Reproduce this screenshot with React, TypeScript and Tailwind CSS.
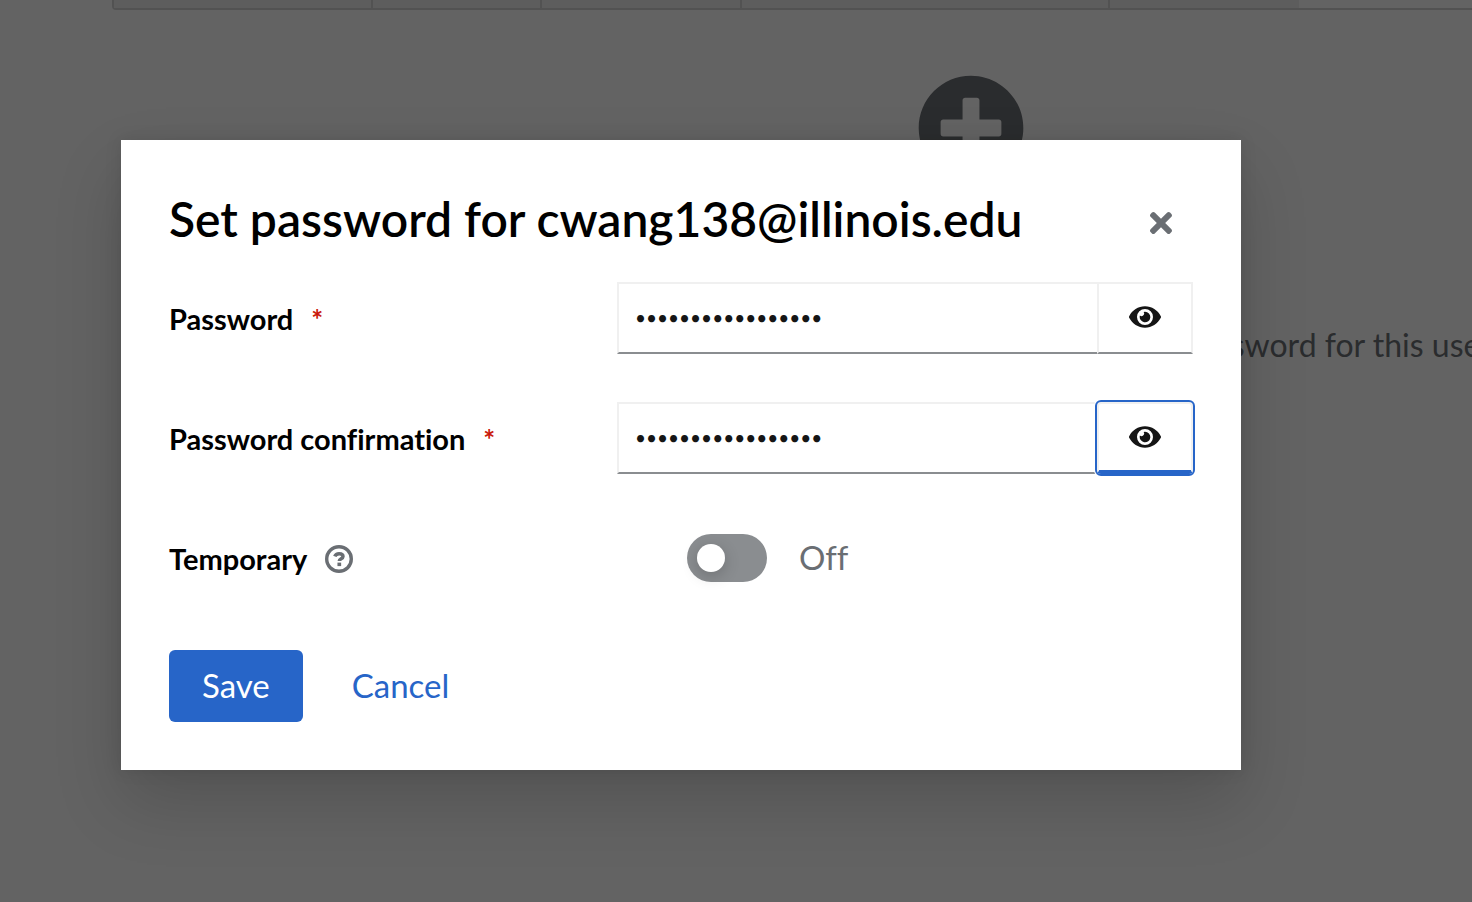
import { useState } from "react";
import type { ReactNode } from "react";
import { FaEye, FaPlusCircle, FaTimes } from "react-icons/fa";

function HelpIcon() {
  return (
    <svg width="28" height="28" viewBox="0 0 28 28" fill="none" stroke="currentColor" aria-hidden="true">
      <circle cx="14" cy="14" r="12.3" strokeWidth="3.4" />
      <path d="M9.8 11.4C10.5 9.5 12.1 8.7 14.1 8.7c2.3 0 3.9 1 3.9 2.8 0 2.4-3.7 2.2-3.7 4.6" strokeWidth="3.5" />
      <path d="M14.3 17.6v3.5" strokeWidth="3.7" />
    </svg>
  );
}

function Backdrop() {
  return (
    <div className="min-h-screen overflow-hidden bg-white text-[#6a6e73]">
      <div className="ml-28 flex h-[10px] rounded-bl border-b-2 border-l-2 border-[#d2d2d2]">
        <div className="w-[259px] border-r-2 border-[#d2d2d2] bg-[#f0f0f0]" />
        <div className="w-[169px] border-r-2 border-[#d2d2d2] bg-[#f0f0f0]" />
        <div className="w-[200px] border-r-2 border-[#d2d2d2] bg-[#f0f0f0]" />
        <div className="w-[368px] border-r-2 border-[#d2d2d2] bg-[#f0f0f0]" />
        <div className="w-[189px] bg-[#f0f0f0]" />
      </div>
      <div className="ml-[470px] flex w-[1002px] flex-col items-center pt-16">
        <FaPlusCircle size={108} />
      </div>
      <p className="mt-[139px] pl-[1183px] text-[32px] leading-12 whitespace-nowrap">
        password for this user.
      </p>
    </div>
  );
}

function Row({ label, htmlFor, after, children }: { label: string; htmlFor: string; after: ReactNode; children: ReactNode }) {
  return (
    <div className="grid grid-cols-[7fr_9fr] items-center">
      <div className="flex items-center gap-[18px] pt-0.5">
        <label htmlFor={htmlFor} className="text-[29px] leading-9 font-bold text-black">
          {label}
        </label>
        {after}
      </div>
      <div className="flex h-18 items-center">{children}</div>
    </div>
  );
}

const required = (
  <span aria-hidden="true" className="text-[28px] leading-9 font-bold text-[#c9190b]">
    *
  </span>
);

function PasswordField({ id, label, focused = false }: { id: string; label: string; focused?: boolean }) {
  const [value, setValue] = useState("correct-horse-bat");
  const [shown, setShown] = useState(false);
  return (
    <Row label={label} htmlFor={id} after={required}>
      <input
        id={id}
        type={shown ? "text" : "password"}
        value={value}
        onChange={(e) => setValue(e.target.value)}
        className={`h-full min-w-0 flex-1 border-2 border-[#f0f0f0] border-b-[#8a8d90] bg-white px-4 pb-0.5 text-[#151515] outline-none ${shown ? "text-[33px]" : "text-[19px]"}`}
      />
      <button
        type="button"
        aria-label={`Show ${label.toLowerCase()}`}
        onClick={() => setShown(!shown)}
        className={
          focused
            ? "relative -ml-0.5 flex h-full w-24 items-center justify-center rounded-sm border-2 border-b-4 border-[#f0f0f0] border-b-[#2765c8] text-[#151515] shadow-[0_0_0_3px_#fff] outline-2 outline-[#2765c8]"
            : "-ml-0.5 flex h-full w-24 items-center justify-center border-2 border-[#f0f0f0] border-b-[#8a8d90] pb-0.5 text-[#151515]"
        }
      >
        <FaEye size={32} />
      </button>
    </Row>
  );
}

export default function App() {
  const [temporary, setTemporary] = useState(false);
  return (
    <div className="relative font-['Lato',sans-serif] [font-variant-ligatures:none]">
      <Backdrop />
      <div className="absolute inset-0 flex items-center justify-center bg-[#030303]/62 pt-2 pr-[110px]">
        <form
          role="dialog"
          aria-labelledby="title"
          onSubmit={(e) => e.preventDefault()}
          className="w-full max-w-[1120px] bg-white p-12 shadow-[0_32px_64px_0_rgba(3,3,3,0.16),0_0_16px_0_rgba(3,3,3,0.1)]"
        >
          <header className="mb-8 flex items-center justify-between pr-4">
            <h1 id="title" className="text-[48px] leading-[62px] font-semibold text-black">
              Set password for cwang138@illinois.edu
            </h1>
            <button type="button" aria-label="Close" className="pt-2 text-[#6a6e73]">
              <FaTimes size={32} />
            </button>
          </header>
          <div className="flex flex-col gap-12">
            <PasswordField id="password" label="Password" />
            <PasswordField id="confirmation" label="Password confirmation" focused />
            <Row
              label="Temporary"
              htmlFor="temporary"
              after={
                <button type="button" aria-label="Help for temporary" className="text-[#6a6e73]">
                  <HelpIcon />
                </button>
              }
            >
              <div className="flex items-center gap-8 pl-[70px]">
                <span className="relative flex">
                  <input
                    id="temporary"
                    type="checkbox"
                    role="switch"
                    checked={temporary}
                    onChange={(e) => setTemporary(e.target.checked)}
                    className="peer h-12 w-20 appearance-none rounded-full bg-[#8a8d90] checked:bg-[#2765c8]"
                  />
                  <span className="pointer-events-none absolute top-2.5 left-2.5 size-7 rounded-full bg-white shadow-[0_4px_16px_0_rgba(3,3,3,0.2)] peer-checked:left-[42px]" />
                </span>
                <span className="pb-0.5 text-[33px] leading-[46px] text-[#6a6e73]">{temporary ? "On" : "Off"}</span>
              </div>
            </Row>
          </div>
          <footer className="mt-14 flex gap-4">
            <button type="submit" className="h-18 rounded-md bg-[#2765c8] px-[33px] pb-0.5 text-[33px] leading-12 text-white">
              Save
            </button>
            <button type="button" className="h-18 px-[33px] pb-0.5 text-[33px] leading-12 text-[#2765c8]">
              Cancel
            </button>
          </footer>
        </form>
      </div>
    </div>
  );
}
